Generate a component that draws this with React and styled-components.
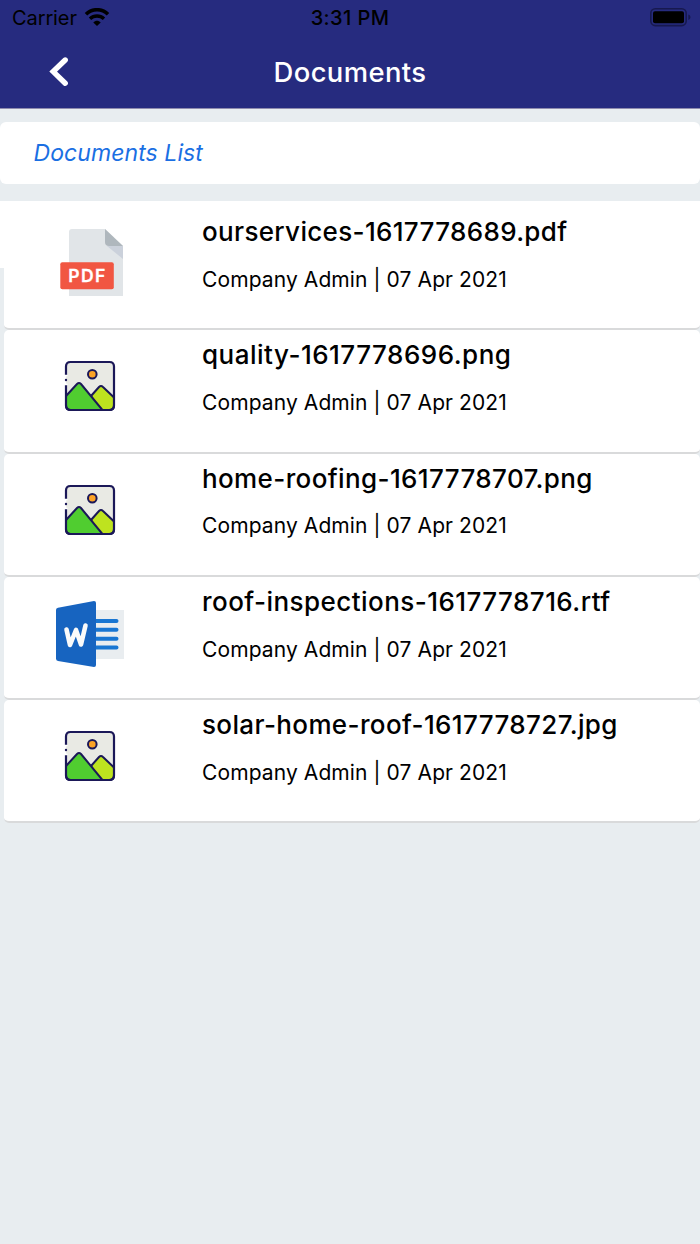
import React from 'react';
import styled, { createGlobalStyle } from 'styled-components';

const colors = {
  navy: '#262b7f',
  background: '#e8edf0',
  light: '#ffffff',
  dark: '#000000',
  link: '#1a6fe3',
  line: '#d9dadb',
};

const GlobalStyle = createGlobalStyle`
  * {
    box-sizing: border-box;
  }

  body {
    margin: 0;
    background-color: ${colors.background};
    font-family: Inter, 'Liberation Sans', sans-serif;
  }
`;

const Screen = styled.div`
  width: 700px;
  min-height: 1244px;
  overflow: hidden;
  background-color: ${colors.background};
`;

const Header = styled.header`
  height: 109px;
  background-color: ${colors.navy};
  border-bottom: 1px solid #8f8cae;
`;

const StatusBar = styled.div`
  display: grid;
  grid-template-columns: 1fr auto 1fr;
  align-items: center;
  height: 36px;
  padding: 0 9px;
  color: ${colors.dark};
  font-size: 20px;
  line-height: 36px;
`;

const Carrier = styled.div`
  display: flex;
  align-items: center;
  gap: 7px;
  padding-left: 3px;
  letter-spacing: -0.1px;
`;

const Time = styled.div`
  font-weight: 500;
  letter-spacing: 0.4px;
`;

const Battery = styled.div`
  display: flex;
  justify-content: flex-end;
`;

const NavBar = styled.div`
  display: grid;
  grid-template-columns: 118px 1fr 118px;
  align-items: center;
  height: 72px;
`;

const BackButton = styled.button`
  display: flex;
  justify-content: center;
  height: 30px;
  padding: 0;
  border: none;
  background: none;
  cursor: pointer;
`;

const PageTitle = styled.h1`
  margin: 0;
  color: ${colors.light};
  font-size: 27.4px;
  font-weight: 500;
  letter-spacing: 0.4px;
  line-height: 33px;
  text-align: center;
`;

const ListHeading = styled.div`
  height: 62px;
  margin: 13px 0 17px;
  padding-left: 33.5px;
  border-radius: 6px;
  background-color: ${colors.light};
  color: ${colors.link};
  font-size: 23px;
  font-style: italic;
  letter-spacing: 0.08px;
  line-height: 62px;
`;

const List = styled.div`
  padding: 6px 0 0 4px;
  background: linear-gradient(${colors.light}, ${colors.light}) no-repeat 0 0 / 100% 67px;
`;

const Row = styled.div`
  display: flex;
  height: 123.3px;
  border-bottom: 2px solid ${colors.line};
  border-radius: 5px;
  background-color: ${colors.light};
`;

const IconCell = styled.div`
  display: flex;
  flex: none;
  width: 198px;
  padding: 21px 0 0 51px;
`;

const Details = styled.div`
  padding-top: 7px;
  white-space: nowrap;
`;

const FileName = styled.div`
  font-size: 26px;
  font-weight: 500;
  letter-spacing: ${({ $spacing }) => $spacing};
  line-height: 35px;
`;

const Meta = styled.div`
  margin-top: 15.8px;
  font-size: 21px;
  letter-spacing: 0.1px;
  line-height: 30px;
`;

const WifiIcon = () => (
  <svg width="26" height="20" viewBox="0 0 26 20">
    <path d="M2 6.200C8.200 0.200 17.800 0.200 24 6.200" fill="none" stroke="#000" strokeWidth="3.600" />
    <path d="M6 10.800C10 7 16 7 20 10.800" fill="none" stroke="#000" strokeWidth="3.400" />
    <path d="M9.300 14.400C11.500 12.300 14.500 12.300 16.700 14.400L13 18Z" fill="#000" />
  </svg>
);

const BatteryIcon = () => (
  <svg width="41" height="20" viewBox="0 0 41 20">
    <rect x="0.800" y="0.800" width="35.400" height="16.800" rx="4.500" fill="none" stroke="#17194f" strokeWidth="1.600" />
    <rect x="3" y="3.200" width="31" height="12" rx="2" fill="#000" />
    <path d="M38.300 6.500C41.200 7.500 41.200 10.900 38.300 11.900Z" fill="#17194f" />
  </svg>
);

const BackIcon = () => (
  <svg width="22" height="30" viewBox="0 0 22 30">
    <path d="M17.200 3L5.200 14.600L17.200 26.200" fill="none" stroke="#fff" strokeWidth="5.400" strokeLinecap="round" />
  </svg>
);

const PdfIcon = () => (
  <svg width="70" height="70" viewBox="0 0 70 70">
    <path d="M17 1H50L68 18V68H14V4Q14 1 17 1Z" fill="#e1e5e8" />
    <path d="M52 18H68V31Z" fill="#cbd1db" />
    <path d="M50 1L68 18H54Q50 18 50 14Z" fill="#afb7bd" />
    <rect x="5.300" y="34.200" width="53.500" height="27" rx="2" fill="#f15642" />
    <text x="13.200" y="54" fill="#fff" stroke="#fff" strokeWidth="0.300" fontSize="17.500" fontWeight="600" textLength="37">PDF</text>
  </svg>
);

const ImageIcon = () => (
  <svg width="70" height="70" viewBox="0 0 70 70">
    <rect x="11.200" y="11" width="48" height="48" rx="4.500" fill="#e9eae4" />
    <path d="M36 45L44 36Q46 34 48 36L59 46.500V54Q59 59 54 59H44Z" fill="#bee31f" stroke="#1b1858" strokeWidth="2" />
    <path d="M11 45L22 33Q24 31 26 33L47.500 59H16Q11 59 11 54Z" fill="#50cd30" stroke="#1b1858" strokeWidth="2" />
    <circle cx="37.300" cy="23.300" r="4.300" fill="#fca326" stroke="#1b1858" strokeWidth="2" />
    <path d="M11 24V15.500Q11 11 15.500 11H54.500Q59 11 59 15.500V54.500Q59 59 54.500 59H15.500Q11 59 11 54.500V34" fill="none" stroke="#1b1858" strokeWidth="2.200" />
    <path d="M9.500 24.500H12.500M9.500 33.500H12.500" stroke="#fff" strokeWidth="1.500" />
    <circle cx="11" cy="29" r="1.200" fill="#1b1858" />
  </svg>
);

const WordIcon = () => (
  <svg width="70" height="72" viewBox="0 -2 70 72">
    <rect x="38" y="10" width="31" height="49" fill="#e9edf0" />
    <path d="M38 21H61.500M38 29.800H61.500M38 38.700H61.500M38 47.600H61.500" stroke="#1976d2" strokeWidth="4" strokeLinecap="round" />
    <path d="M3 7.800L39 1Q41 1 41 3V65Q41 67 39 67L3 61Q1 60.500 1 58.500V10Q1 8.200 3 7.800Z" fill="#1764c0" />
    <path d="M11.500 29.500L15 45L21 30L26 44.500L30.500 25.500" fill="none" stroke="#fafafa" strokeWidth="4.600" strokeLinecap="round" strokeLinejoin="round" />
  </svg>
);

const icons = {
  pdf: PdfIcon,
  image: ImageIcon,
  word: WordIcon,
};

const documents = [
  { name: 'ourservices-1617778689.pdf', type: 'pdf', spacing: '0.33px' },
  { name: 'quality-1617778696.png', type: 'image', spacing: '0.5px' },
  { name: 'home-roofing-1617778707.png', type: 'image', spacing: '0.38px' },
  { name: 'roof-inspections-1617778716.rtf', type: 'word', spacing: '0.45px' },
  { name: 'solar-home-roof-1617778727.jpg', type: 'image', spacing: '0.37px' },
];

function DocumentRow({ name, type, spacing }) {
  const Icon = icons[type];

  return (
    <Row>
      <IconCell>
        <Icon />
      </IconCell>
      <Details>
        <FileName $spacing={spacing}>{name}</FileName>
        <Meta>Company Admin | 07 Apr 2021</Meta>
      </Details>
    </Row>
  );
}

function App() {
  return (
    <>
      <GlobalStyle />
      <Screen>
        <Header>
          <StatusBar>
            <Carrier>
              Carrier
              <WifiIcon />
            </Carrier>
            <Time>3:31 PM</Time>
            <Battery>
              <BatteryIcon />
            </Battery>
          </StatusBar>
          <NavBar>
            <BackButton aria-label="Back">
              <BackIcon />
            </BackButton>
            <PageTitle>Documents</PageTitle>
          </NavBar>
        </Header>
        <ListHeading>Documents List</ListHeading>
        <List>
          {documents.map((doc) => (
            <DocumentRow key={doc.name} {...doc} />
          ))}
        </List>
      </Screen>
    </>
  );
}

export default App;
